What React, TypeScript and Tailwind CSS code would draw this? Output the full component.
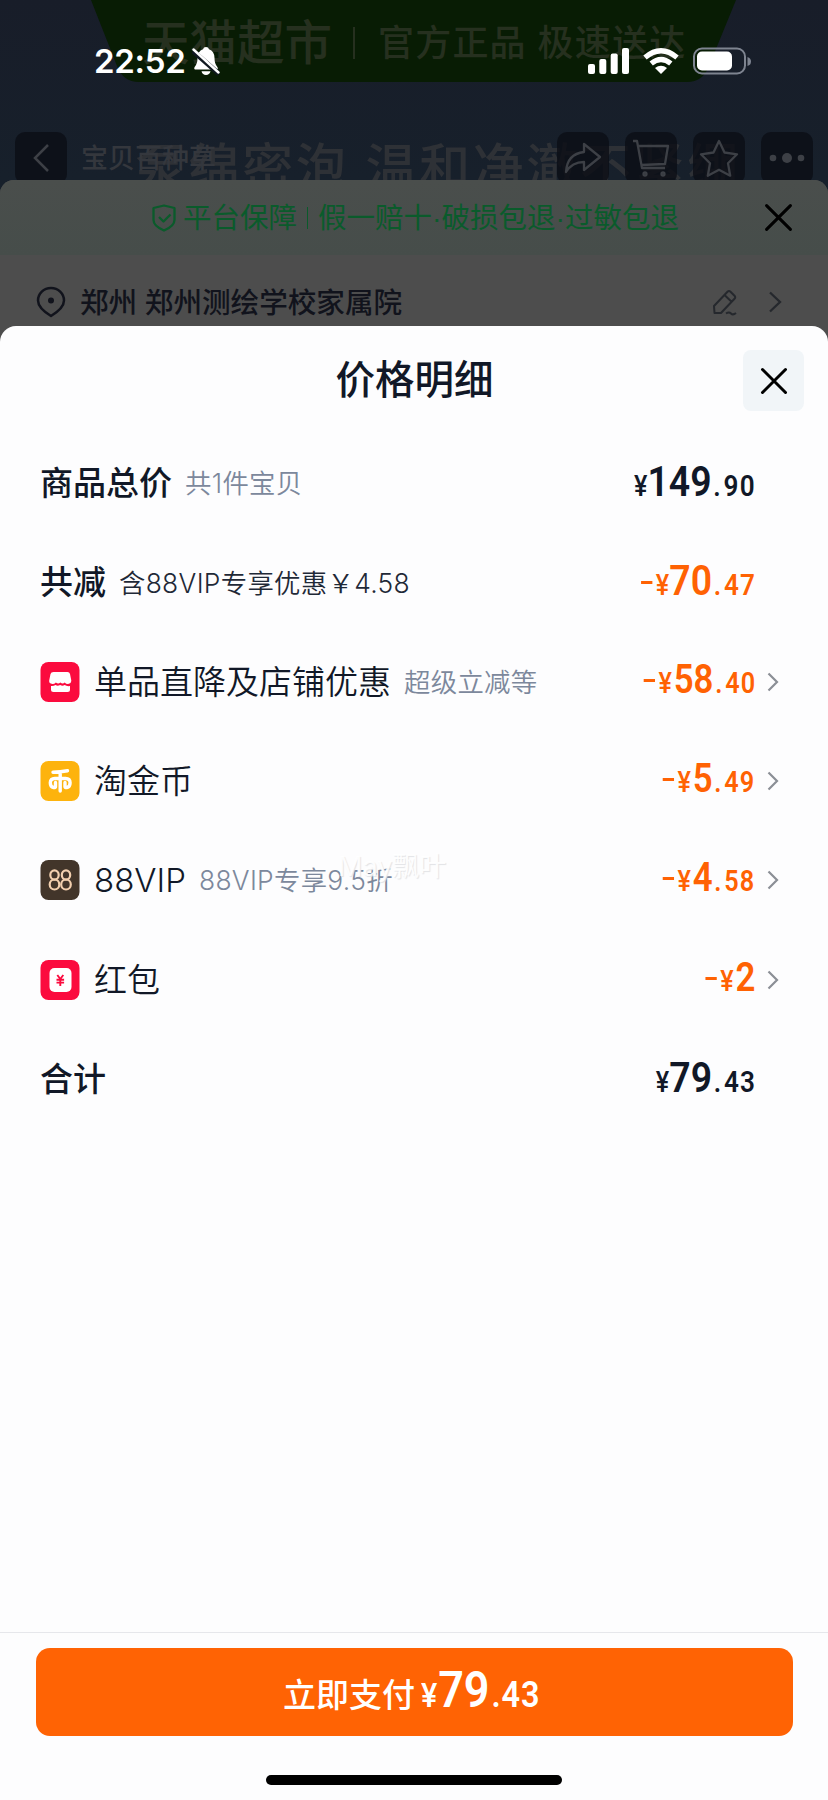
import React from "react";

const cjk = "font-[Inter,'Noto_Sans_CJK_SC',sans-serif]";

type PriceProps = {
  minus?: boolean;
  int: string;
  dec?: string;
  tone: "dark" | "orange";
  big?: boolean;
};

function Price({ minus, int, dec, tone, big }: PriceProps) {
  return (
    <span
      className={`flex origin-right -translate-y-[2px] scale-x-[0.87] items-baseline font-['Roboto',sans-serif] leading-none font-semibold ${
        tone === "dark" ? "text-[#111827]" : "text-[#ff6203]"
      }`}
    >
      {minus && <span className="mr-[4px] h-[3px] w-[13px] -translate-y-[11px] bg-[#ff6203]" />}
      <span className={big ? "text-[29px] font-medium" : "mr-[2px] text-[29px] font-medium"}>¥</span>
      <span className={big ? "text-[43px]" : "text-[40px]"}>{int}</span>
      {dec && (
        <span className={`-mr-[1px] ml-[2px] tracking-[1.300px] ${big ? "text-[30px]" : "text-[29px]"}`}>
          .<span className="ml-[2px]">{dec}</span>
        </span>
      )}
    </span>
  );
}

function Chevron() {
  return (
    <svg width="12" height="20" viewBox="0 0 12 20" fill="none" stroke="#8b8f96" strokeWidth="2.2">
      <path d="M1.5 1.5 10 10 1.5 18.5" />
    </svg>
  );
}

function StoreIcon() {
  return (
    <svg width="40" height="40" viewBox="0 0 39 40">
      <rect width="39" height="40" rx="8" fill="#fb0b3e" />
      <path
        d="M13 10h14q2 0 2.500 2l1.300 6.500q0 3-3.300 3.500q-2 0-3.300-1.500q-2 2-4.400 0q-2 2-4.400 0q-1.500 1.500-3.400 1.500q-3.800-.5-3.300-3.500l1.300-6.500q.5-2 3-2z"
        fill="#fff"
      />
      <path d="M10.500 24q2.500 .3 4.500-1q2.200 1.500 4.600 0q2.400 1.500 4.600 0q2 1.500 5.300 1v3.500q0 2.500-2.500 2.500h-14q-2.500 0-2.500-2.500z" fill="#fff" />
    </svg>
  );
}

function CoinIcon() {
  return (
    <svg width="40" height="40" viewBox="0 0 39 40" fill="none" stroke="#fff" strokeWidth="3.400" strokeLinecap="round">
      <rect width="39" height="40" rx="8" fill="#fdb30d" stroke="none" />
      <path d="M12.500 11.200Q20 11 27 9.800M19.700 11V30M14.500 26.500h-1.500q-3.200-.5-3.200-4.700q0-4.300 4.500-4.300h10.800q4.500 0 4.500 4.300q0 4.200-3.200 4.700h-1.500M15 21.500v4.500M24.500 21.500v4.500" />
    </svg>
  );
}

function VipIcon() {
  return (
    <svg width="40" height="40" viewBox="0 0 39 40" fill="none" stroke="#f2cfae" strokeWidth="2.200">
      <rect width="39" height="40" rx="8" fill="#42352a" stroke="none" />
      <ellipse cx="14" cy="15" rx="4.200" ry="4.600" />
      <ellipse cx="14" cy="24.500" rx="4.800" ry="5" />
      <ellipse cx="25.500" cy="15" rx="4.200" ry="4.600" />
      <ellipse cx="25.500" cy="24.500" rx="4.800" ry="5" />
    </svg>
  );
}

function RedPacketIcon() {
  return (
    <svg width="40" height="40" viewBox="0 0 39 40" fill="none">
      <rect width="39" height="40" rx="8" fill="#fb0b3e" />
      <rect x="9" y="8" width="22" height="24" rx="5" fill="#fff" />
      <path d="M16.800 15l3 4 3-4M19.800 19v7M16 19.700h7.600M16 22.600h7.600" stroke="#fb0b3e" strokeWidth="1.900" />
    </svg>
  );
}

type RowProps = {
  icon?: React.ReactNode;
  label: string;
  note?: string;
  noteDark?: boolean;
  price: PriceProps;
};

function Row({ icon, label, note, noteDark, price }: RowProps) {
  return (
    <div className={`flex h-[99.300px] items-center pr-[49px] ${icon ? "pb-[1px] pl-[40px]" : "pl-[40px]"}`}>
      {icon && <span className="mr-[14px]">{icon}</span>}
      <span
        className={`text-[33px] leading-none whitespace-nowrap text-[#111827] ${icon ? "mt-[1px] font-[350]" : "font-medium"}`}
      >
        {label}
      </span>
      {note && (
        <span
          className={`ml-[13px] text-[26.400px] leading-none font-[350] tracking-[0.300px] whitespace-nowrap ${
            noteDark ? "text-[#1f2937]" : "text-[#7c889c]"
          }`}
        >
          {note}
        </span>
      )}
      <span className="ml-auto">
        <Price {...price} />
      </span>
      <span className="ml-[12px] flex w-[12px]">{icon && <Chevron />}</span>
    </div>
  );
}

function Cross({ size }: { size: number }) {
  return (
    <svg width={size} height={size} viewBox="0 0 28 28" stroke="#000" strokeWidth="3" strokeLinecap="round">
      <path d="M2.500 2.500l23 23M25.500 2.500l-23 23" />
    </svg>
  );
}

function NavButton({ children }: { children: React.ReactNode }) {
  return <div className="flex size-[52px] items-center justify-center rounded-[10px] bg-[#0b0e15]/80">{children}</div>;
}

function StatusBar() {
  return (
    <div className="absolute inset-x-0 top-[43px] flex h-[36px] items-center pr-[76px] pl-[94px] text-white">
      <span className="text-[33px] leading-none font-semibold tracking-[-0.300px]">22:52</span>
      <svg className="ml-[7px]" width="28" height="30" viewBox="0 0 28 30">
        <path
          d="M14 1q2.500 0 3 2.200q5.500 2 5.500 8.800q0 6 3 9.200q1 2.300-1.500 2.300H4q-2.500 0-1.500-2.300q3-3.200 3-9.200q0-6.800 5.500-8.800Q11.500 1 14 1zM9.500 25.200h9q-1 3.800-4.500 3.800t-4.500-3.800z"
          fill="#fff"
        />
        <path d="M1 5l26 23" stroke="#101820" strokeWidth="5" />
        <path d="M1.500 3.500l25 23" stroke="#fff" strokeWidth="2.400" strokeLinecap="round" />
      </svg>
      <svg className="ml-auto" width="43" height="28" viewBox="0 0 43 28" fill="#fff">
        <rect x="1" y="17" width="7" height="10" rx="2" />
        <rect x="12.300" y="12" width="7" height="15" rx="2" />
        <rect x="23.700" y="6.500" width="7" height="20.500" rx="2" />
        <rect x="35" y="1" width="7" height="26" rx="2" />
      </svg>
      <svg className="ml-[12px]" width="38" height="28" viewBox="0 0 38 28" fill="none" stroke="#fff" strokeWidth="5.200">
        <path d="M3 10.500q16-13.500 32 0" />
        <path d="M9.200 16.500q9.800-8 19.600 0" />
        <path d="M19 27l-6-6q6-4.500 12 0z" fill="#fff" stroke="none" />
      </svg>
      <svg className="ml-[12px]" width="60" height="28" viewBox="0 0 60 28" fill="none">
        <rect x="2" y="1.500" width="51" height="25" rx="8" stroke="#7e8490" strokeWidth="2" />
        <rect x="5" y="4.500" width="35" height="19" rx="5" fill="#fff" />
        <path d="M55.500 10q3.500 1 3.500 4.500t-3.500 4.500z" fill="#7e8490" />
      </svg>
    </div>
  );
}

export default function App() {
  return (
    <div className={`relative flex h-[1800px] w-[828px] flex-col overflow-hidden bg-[#181d27] ${cjk}`}>
      <div className="relative h-[180px] overflow-hidden bg-gradient-to-b from-[#181d29] to-[#17202b]">
        <svg className="absolute top-0 left-0" width="828" height="84" viewBox="0 0 828 84">
          <path d="M91 0H736L709 66Q703 82 687 82H139Q123 82 117 66z" fill="#081c04" />
        </svg>
        <div className="absolute top-[15px] left-[142px] flex h-[56px] items-center whitespace-nowrap text-[#26301f]">
          <span className="text-[47.500px] leading-none font-medium">天猫超市</span>
          <span className="mr-[23px] ml-[21px] h-[32px] w-[2px] bg-[#26301f]" />
          <span className="text-[36px] leading-none font-medium tracking-[1.200px]">官方正品 极速送达</span>
        </div>
        <div className="absolute top-[142px] left-[135px] text-[51px] leading-none font-medium tracking-[2.600px] whitespace-nowrap text-[#2e3136]">
          泵绵密泡 温和净澈不紧绷
        </div>
        <div className="absolute inset-x-[15px] top-[132px] flex items-center gap-[16px] text-[#3d4046]">
          <NavButton>
            <svg width="20" height="30" viewBox="0 0 20 30" fill="none" stroke="currentColor" strokeWidth="2.500">
              <path d="M17 2 4 15l13 13" />
            </svg>
          </NavButton>
          <span className="-ml-[2px] text-[27px] leading-none font-medium whitespace-nowrap text-[#34373d]">宝贝百种草</span>
          <span className="ml-auto" />
          <NavButton>
            <svg width="40" height="34" viewBox="0 0 40 34" fill="none" stroke="currentColor" strokeWidth="2.300" strokeLinejoin="round">
              <path d="M21 3 37 16 21 29V21Q9 21 3 31Q4 13 21 11z" />
            </svg>
          </NavButton>
          <NavButton>
            <svg width="40" height="40" viewBox="0 0 40 40" fill="none" stroke="currentColor" strokeWidth="2.300" strokeLinejoin="round">
              <path d="M2 3h4l5 27h23M7 8h30l-3 18-24 1" />
              <circle cx="14" cy="36" r="1.500" />
              <circle cx="32" cy="36" r="1.500" />
            </svg>
          </NavButton>
          <NavButton>
            <svg width="40" height="38" viewBox="0 0 40 38" fill="none" stroke="currentColor" strokeWidth="2.300" strokeLinejoin="round">
              <path d="M20 2l5.500 11.500 12.500 1.800-9 8.900 2.200 12.500L20 30.800 8.800 36.700 11 24.200l-9-8.900 12.500-1.800z" />
            </svg>
          </NavButton>
          <NavButton>
            <svg width="36" height="12" viewBox="0 0 36 12" fill="currentColor">
              <circle cx="4" cy="6" r="3.300" />
              <circle cx="18" cy="6" r="5" />
              <circle cx="32" cy="6" r="3.300" />
            </svg>
          </NavButton>
        </div>
        <StatusBar />
      </div>

      <div className="bg-[#17202b]">
        <div className="h-[146px] overflow-hidden rounded-t-[14px] bg-[#4d4d4d]">
          <div className="flex h-[75px] items-center bg-gradient-to-b from-[#4a4e4c] to-[#464d4a] pr-[35px] pl-[151px] text-[28.500px] leading-none whitespace-nowrap text-[#0a5b2b]">
            <svg width="26" height="28" viewBox="0 0 26 28" fill="none" stroke="currentColor" strokeWidth="2.300" strokeLinejoin="round">
              <path d="M13 1.500l10.500 2.500v12q0 6-10.500 10.500Q2.500 22 2.500 16V4z" />
              <path d="M8 13l4.500 4.500 7-7" />
            </svg>
            <span className="mt-[2px] ml-[6px] font-['Liberation_Sans','Noto_Sans_CJK_SC',sans-serif]">平台保障</span>
            <span className="mx-[10px] h-[22px] w-px bg-[#0a5b2b]" />
            <span className="mt-[2px] font-['Liberation_Sans','Noto_Sans_CJK_SC',sans-serif]">假一赔十·破损包退·过敏包退</span>
            <span className="ml-auto">
              <Cross size={29} />
            </span>
          </div>
          <div className="flex h-[94px] items-center pr-[46px] pl-[36px] text-[#11131c]">
            <svg width="30" height="32" viewBox="0 0 30 32" fill="none" stroke="currentColor" strokeWidth="2.500">
              <path d="M15 30Q2 22 2 14.500a13 12.500 0 0 1 26 0Q28 22 15 30z" strokeLinejoin="round" />
              <circle cx="15" cy="14.500" r="3" fill="currentColor" stroke="none" />
            </svg>
            <span className="mt-[2px] ml-[14px] text-[28.600px] leading-none font-medium whitespace-nowrap">郑州 郑州测绘学校家属院</span>
            <svg className="ml-auto" width="26" height="27" viewBox="0 0 26 27" fill="none" stroke="#25282d" strokeWidth="2" strokeLinejoin="round">
              <path d="M15.500 2.800q1.500-1.500 3 0l4 4q1.500 1.500 0 3L9 24H2.500L2 17zM12.500 6l6.800 6.500M14 24.500q3-2 5 0t5-.5" />
            </svg>
            <svg className="ml-[30px]" width="14" height="22" viewBox="0 0 14 22" fill="none" stroke="#25282d" strokeWidth="2.300">
              <path d="M2 1.500 12 11 2 20.500" />
            </svg>
          </div>
        </div>
      </div>

      <div className="flex flex-1 flex-col bg-[#4d4d4d]">
        <div className="relative flex flex-1 flex-col rounded-t-[16px] bg-[#fdfdfe]">
          <div className="flex h-[108px] items-center justify-between pt-[1px] pr-[24px] pl-[25px]">
            <span className="w-[61px]" />
            <h1 className="text-[39.500px] leading-none font-medium text-[#111827]">价格明细</h1>
            <button className="flex size-[61px] items-center justify-center rounded-[8px] bg-[#f1f5f8]">
              <Cross size={28} />
            </button>
          </div>
          <Row label="商品总价" note="共1件宝贝" price={{ int: "149", dec: "90", tone: "dark", big: true }} />
          <Row label="共减" note="含88VIP专享优惠￥4.58" noteDark price={{ minus: true, int: "70", dec: "47", tone: "orange", big: true }} />
          <Row icon={<StoreIcon />} label="单品直降及店铺优惠" note="超级立减等" price={{ minus: true, int: "58", dec: "40", tone: "orange" }} />
          <Row icon={<CoinIcon />} label="淘金币" price={{ minus: true, int: "5", dec: "49", tone: "orange" }} />
          <Row icon={<VipIcon />} label="88VIP" note="88VIP专享9.5折" price={{ minus: true, int: "4", dec: "58", tone: "orange" }} />
          <Row icon={<RedPacketIcon />} label="红包" price={{ minus: true, int: "2", tone: "orange" }} />
          <Row label="合计" price={{ int: "79", dec: "43", tone: "dark", big: true }} />
          <div className="absolute top-[527px] left-[338px] text-[27px] leading-none whitespace-nowrap text-white/90 [text-shadow:1px_1px_1px_#e2e3e6]">
            May飘叶
          </div>

          <div className="mt-auto flex h-[168px] flex-col items-center border-t border-[#e6e7eb] pt-[15px]">
            <button className="flex h-[88px] w-[757px] items-center justify-center rounded-[14px] bg-[#ff6304] text-white">
              <span className="flex -translate-x-[2px] -translate-y-[2px] items-baseline leading-none">
                <span className="text-[33px] font-medium">立即支付</span>
                <span className="flex w-[126px] items-baseline font-['Roboto',sans-serif] font-semibold">
                  <span className="ml-[6px] flex origin-left scale-x-[0.9] items-baseline">
                    <span className="text-[34px] font-medium">¥</span>
                    <span className="ml-[1px] text-[50px]">79</span>
                    <span className="ml-[2px] text-[36px] tracking-[1px]">.43</span>
                  </span>
                </span>
              </span>
            </button>
            <div className="mt-[39px] h-[10px] w-[296px] rounded-full bg-black" />
          </div>
        </div>
      </div>
    </div>
  );
}
